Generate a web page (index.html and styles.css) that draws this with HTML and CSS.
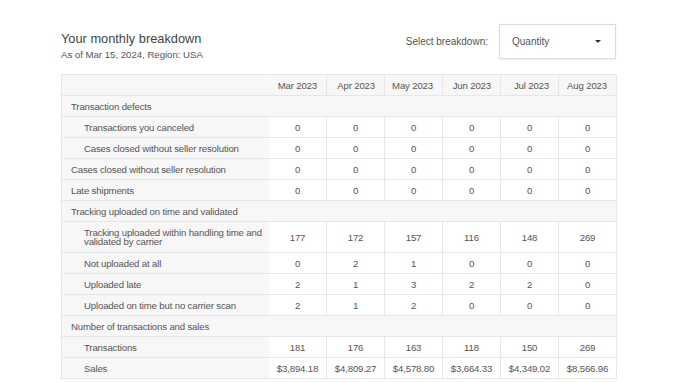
FILE: index.html
```html
<!DOCTYPE html>
<html>
<head>
<meta charset="utf-8">
<link rel="stylesheet" href="styles.css">
</head>
<body>
<div class="page">
  <div class="top">
    <div class="heading">
      <h1 class="title">Your monthly breakdown</h1>
      <div class="subtitle">As of Mar 15, 2024, Region: USA</div>
    </div>
    <div class="picker">
      <span class="picker-label">Select breakdown:</span>
      <div class="select">
        <span>Quantity</span>
        <span class="caret"></span>
      </div>
    </div>
  </div>
  <table class="grid">
    <colgroup>
      <col class="c-label"><col class="c-val"><col class="c-val"><col class="c-val"><col class="c-val"><col class="c-val"><col class="c-val">
    </colgroup>
    <thead>
      <tr class="head">
        <th></th><th>Mar 2023</th><th>Apr 2023</th><th>May 2023</th><th>Jun 2023</th><th>Jul 2023</th><th>Aug 2023</th>
      </tr>
    </thead>
    <tbody>
      <tr class="cat"><td colspan="7">Transaction defects</td></tr>
      <tr><td class="lbl sub">Transactions you canceled</td><td>0</td><td>0</td><td>0</td><td>0</td><td>0</td><td>0</td></tr>
      <tr><td class="lbl sub">Cases closed without seller resolution</td><td>0</td><td>0</td><td>0</td><td>0</td><td>0</td><td>0</td></tr>
      <tr><td class="lbl">Cases closed without seller resolution</td><td>0</td><td>0</td><td>0</td><td>0</td><td>0</td><td>0</td></tr>
      <tr><td class="lbl">Late shipments</td><td>0</td><td>0</td><td>0</td><td>0</td><td>0</td><td>0</td></tr>
      <tr class="cat"><td colspan="7">Tracking uploaded on time and validated</td></tr>
      <tr class="tall"><td class="lbl sub">Tracking uploaded within handling time and validated by carrier</td><td>177</td><td>172</td><td>157</td><td>116</td><td>148</td><td>269</td></tr>
      <tr><td class="lbl sub">Not uploaded at all</td><td>0</td><td>2</td><td>1</td><td>0</td><td>0</td><td>0</td></tr>
      <tr><td class="lbl sub">Uploaded late</td><td>2</td><td>1</td><td>3</td><td>2</td><td>2</td><td>0</td></tr>
      <tr><td class="lbl sub">Uploaded on time but no carrier scan</td><td>2</td><td>1</td><td>2</td><td>0</td><td>0</td><td>0</td></tr>
      <tr class="cat"><td colspan="7">Number of transactions and sales</td></tr>
      <tr><td class="lbl sub">Transactions</td><td>181</td><td>176</td><td>163</td><td>118</td><td>150</td><td>269</td></tr>
      <tr><td class="lbl sub">Sales</td><td>$3,894.18</td><td>$4,809.27</td><td>$4,578.80</td><td>$3,664.33</td><td>$4,349.02</td><td>$8,566.96</td></tr>
    </tbody>
  </table>
</div>
</body>
</html>
```

FILE: styles.css
```css
html, body {
  margin: 0;
  padding: 0;
  background: #ffffff;
}
body {
  font-family: "Liberation Sans", Arial, sans-serif;
  color: #555555;
}
.page {
  padding: 24px 0 0 61px;
  width: 555px;
}
.top {
  display: flex;
  justify-content: space-between;
  align-items: flex-start;
  height: 50px;
}
.heading {
  padding-top: 7px;
}
.title {
  margin: 0;
  font-size: 12.8px;
  font-weight: normal;
  color: #444444;
  line-height: 16px;
}
.subtitle {
  font-size: 9.6px;
  line-height: 13px;
  margin-top: 1px;
  color: #555555;
}
.picker {
  display: flex;
  align-items: center;
  gap: 11px;
}
.picker-label {
  font-size: 10px;
  color: #555555;
}
.select {
  box-sizing: border-box;
  width: 117px;
  height: 35px;
  border: 1px solid #dcdcdc;
  box-shadow: 0 1px 2px rgba(0,0,0,0.08);
  display: flex;
  align-items: center;
  justify-content: space-between;
  padding: 0 14px 0 12px;
  font-size: 10px;
  color: #555555;
}
.caret {
  width: 0;
  height: 0;
  border-left: 3px solid transparent;
  border-right: 3px solid transparent;
  border-top: 3px solid #333333;
}
.grid {
  border-collapse: collapse;
  width: 555px;
  table-layout: fixed;
  font-size: 9.6px;
  letter-spacing: -0.15px;
  border: 1px solid #e6e6e6;
}
.c-label { width: 207px; }
.c-val { width: 58px; }
.grid th, .grid td {
  height: 20px;
  padding: 0;
  border: 1px solid #e6e6e6;
  text-align: center;
  font-weight: normal;
  color: #555555;
  line-height: 11px;
}
.head th {
  background: #f7f7f7;
  text-align: right;
  padding-right: 9px;
}
.head th:first-child { border-right-color: #f7f7f7; }
.cat td {
  background: #f7f7f7;
  text-align: left;
  padding-left: 9px;
}
.grid td.lbl {
  background: #f7f7f7;
  text-align: left;
  padding-left: 9px;
  border-right-color: #f7f7f7;
}
.grid td.sub {
  padding-left: 22px;
}
.tall td {
  height: 30px;
}
.tall td.lbl {
  line-height: 9px;
  padding-right: 2px;
}
```
